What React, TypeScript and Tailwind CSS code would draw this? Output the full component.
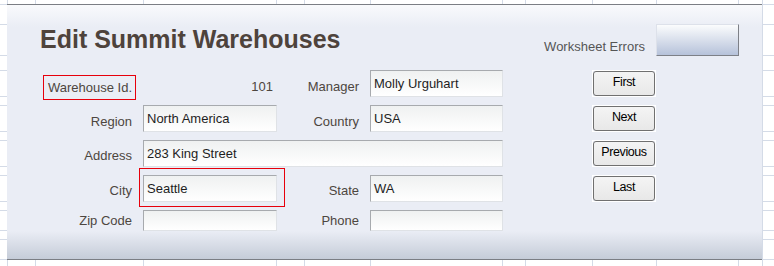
import React from "react";

const sheetCols = [8, 28, 108, 133, 28, 66, 132, 23, 67, 64, 82, 24, 12];
const sheetRows = [5, 20, 31, 15, 26, 9, 26, 9, 26, 9, 26, 9, 20, 9, 20, 7];

const font = { fontFamily: '"Liberation Sans", Arial, sans-serif' };

function Field({ value, className = "" }: { value?: string; className?: string }) {
    return (
        <div
            className={`flex items-start pl-[3px] pt-[5px] text-[13px] leading-4 text-[#1e1e1e] bg-[linear-gradient(to_bottom,#eff1f1,#ffffff)] border border-t-[#a7aaae] border-l-[#a7aaae] border-r-[#dfe2e6] border-b-[#dfe2e6] ${className}`}
        >
            {value}
        </div>
    );
}

function NavButton({ label, row }: { label: string; row: string }) {
    return (
        <div className={`col-start-7 ${row} border border-white`}>
            <button className="w-full h-full rounded-[3px] border border-[#707070] bg-[linear-gradient(to_bottom,#f4f4f4,#e8e8e8)] text-[12.5px] tracking-[-0.4px] text-black leading-none pb-[2px]">
                {label}
            </button>
        </div>
    );
}

export default function App() {
    return (
        <div className="relative w-[774px] h-[266px] overflow-hidden bg-white" style={font}>
            {/* worksheet grid behind the form */}
            <div
                className="grid"
                style={{
                    gridTemplateColumns: sheetCols.map((c) => `${c}px`).join(" "),
                    gridTemplateRows: sheetRows.map((r) => `${r}px`).join(" "),
                }}
            >
                {sheetRows.map((_, r) =>
                    sheetCols.map((_, c) => (
                        <div key={`${r}-${c}`} className="border-r border-b border-[#d4dbe7]" />
                    ))
                )}
            </div>

            {/* form panel */}
            <div className="absolute left-[7px] top-[4px] w-[755px] h-[256px] border-t border-b border-[#7b7e84] bg-[linear-gradient(to_bottom,#f9fafc_0px,#eaedf5_22px,#eaedf5_226px,#c5ccd8_254px)]">
                <div className="grid grid-cols-[28px_108px_134px_93px_133px_89px_64px_83px_23px] grid-rows-[19px_32px_14px_27px_8px_27px_8px_27px_8px_27px_8px_21px_28px] text-[13px] leading-4 text-[#4d4640]">
                    <h1 className="col-start-2 col-span-4 row-start-2 pl-[5px] pt-[3px] text-[25px] leading-none font-bold text-[#4e433c]">
                        Edit Summit Warehouses
                    </h1>
                    <div className="col-start-6 col-span-2 row-start-2 self-end pb-[1px] pr-[11px] text-right text-[#555]">
                        Worksheet Errors
                    </div>
                    <div className="col-start-8 row-start-2 border border-t-[#dde1ea] border-l-[#dde1ea] border-r-[#7d8087] border-b-[#7d8087] bg-[linear-gradient(to_bottom,#fbfcfd,#b6c2da)]" />

                    {/* row: warehouse id / manager */}
                    <div className="col-start-2 row-start-4 self-start mt-[5px] ml-[8px] w-[93px] h-[25px] pl-[5px] flex items-center">
                        Warehouse Id.
                    </div>
                    <div className="col-start-2 row-start-4 self-start mt-[5px] ml-[8px] w-[93px] h-[25px] border border-red-600" />
                    <div className="col-start-3 row-start-4 pt-[9px] pr-[4px] text-right">101</div>
                    <div className="col-start-4 row-start-4 pt-[9px] pr-[11px] text-right">Manager</div>
                    <Field value="Molly Urguhart" className="col-start-5 row-start-4" />

                    {/* row: region / country */}
                    <div className="col-start-2 row-start-6 pt-[9px] pr-[11px] text-right">Region</div>
                    <Field value="North America" className="col-start-3 row-start-6" />
                    <div className="col-start-4 row-start-6 pt-[9px] pr-[11px] text-right">Country</div>
                    <Field value="USA" className="col-start-5 row-start-6" />

                    {/* row: address */}
                    <div className="col-start-2 row-start-8 pt-[8px] pr-[11px] text-right">Address</div>
                    <Field value="283 King Street" className="col-start-3 col-span-3 row-start-8" />

                    {/* row: city / state */}
                    <div className="col-start-2 row-start-10 pt-[8px] pr-[11px] text-right">City</div>
                    <div className="relative col-start-3 row-start-10 flex">
                        <Field value="Seattle" className="flex-1" />
                        <div className="absolute -left-[4px] -top-[7px] -right-[8px] -bottom-[5px] border border-red-600" />
                    </div>
                    <div className="col-start-4 row-start-10 pt-[8px] pr-[11px] text-right">State</div>
                    <Field value="WA" className="col-start-5 row-start-10" />

                    {/* row: zip / phone */}
                    <div className="col-start-2 row-start-12 pt-[3px] pr-[11px] text-right">Zip Code</div>
                    <Field className="col-start-3 row-start-12" />
                    <div className="col-start-4 row-start-12 pt-[3px] pr-[11px] text-right">Phone</div>
                    <Field className="col-start-5 row-start-12" />

                    <NavButton label="First" row="row-start-4" />
                    <NavButton label="Next" row="row-start-6" />
                    <NavButton label="Previous" row="row-start-8" />
                    <NavButton label="Last" row="row-start-10" />
                </div>
            </div>
        </div>
    );
}
